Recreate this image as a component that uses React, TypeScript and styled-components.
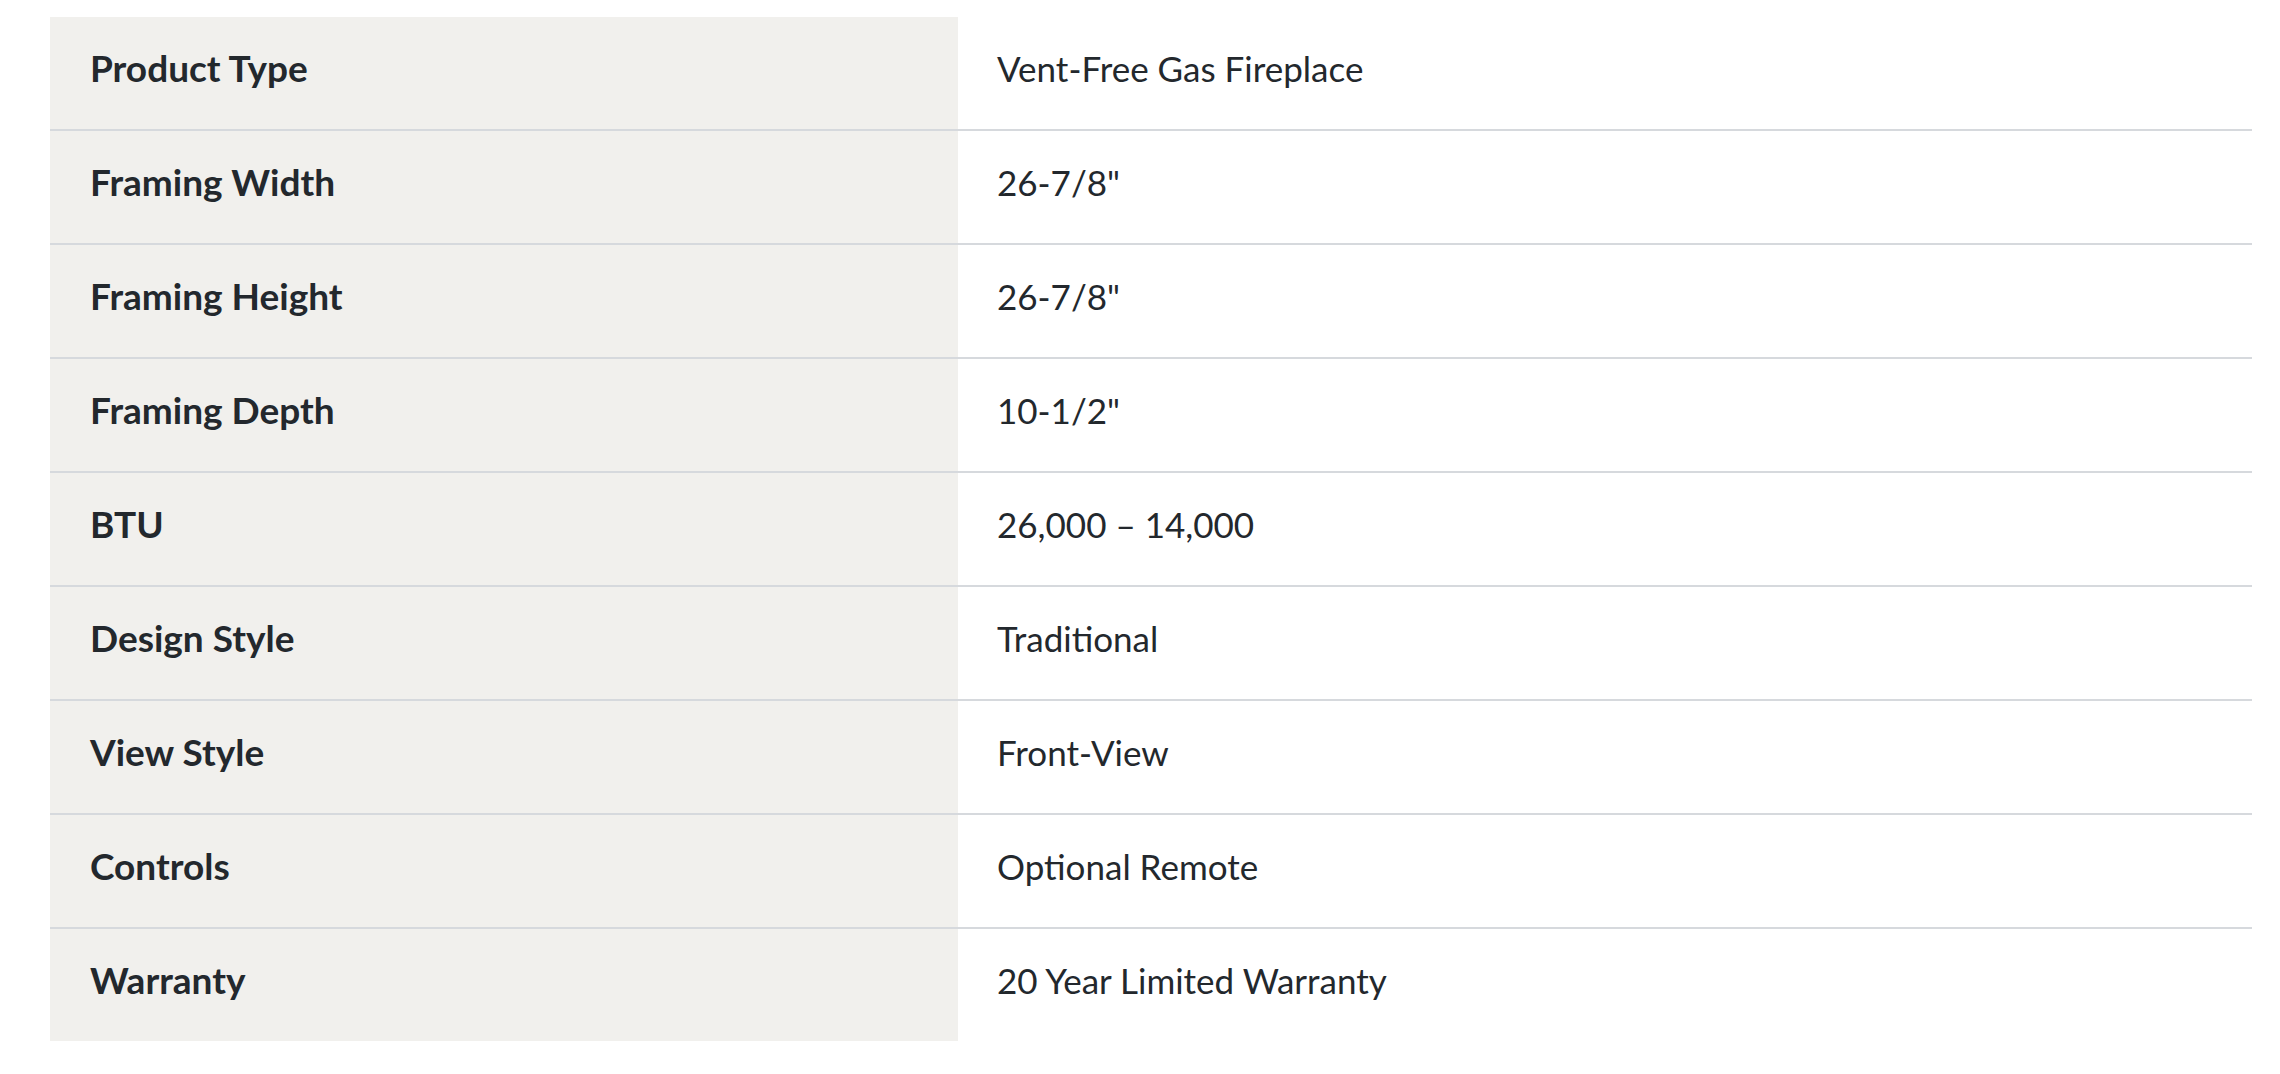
import React from "react";
import styled, { createGlobalStyle } from "styled-components";

const Global = createGlobalStyle`
  html, body { margin: 0; padding: 0; background: #ffffff; }
  body { font-family: Lato, "Open Sans", sans-serif; color: #23282d; }
`;

const Page = styled.div`
  padding: 17px 28px 33px 50px;
`;

const SpecTable = styled.dl`
  margin: 0;
  width: 2202px;
  display: flex;
  flex-direction: column;
`;

const Row = styled.div`
  display: grid;
  grid-template-columns: 908px 1fr;
  height: 112px;
  & + & {
    border-top: 2px solid #d6d9dd;
  }
`;

const Label = styled.dt`
  margin: 0;
  display: flex;
  align-items: center;
  background: #f1f0ed;
  padding: 0 38px 11px 40px;
  font-size: 37px;
  font-weight: 700;
  color: #23282d;
`;

const Value = styled.dd`
  margin: 0;
  display: flex;
  align-items: center;
  padding: 0 36px 11px 39px;
  font-size: 35px;
  font-weight: 400;
  color: #23282d;
`;

const specs: [string, string][] = [
  ["Product Type", "Vent-Free Gas Fireplace"],
  ["Framing Width", '26-7/8"'],
  ["Framing Height", '26-7/8"'],
  ["Framing Depth", '10-1/2"'],
  ["BTU", "26,000 – 14,000"],
  ["Design Style", "Traditional"],
  ["View Style", "Front-View"],
  ["Controls", "Optional Remote"],
  ["Warranty", "20 Year Limited Warranty"],
];

export default function App() {
  return (
    <>
      <Global />
      <Page>
        <SpecTable>
          {specs.map(([k, v]) => (
            <Row key={k}>
              <Label>{k}</Label>
              <Value>{v}</Value>
            </Row>
          ))}
        </SpecTable>
      </Page>
    </>
  );
}
